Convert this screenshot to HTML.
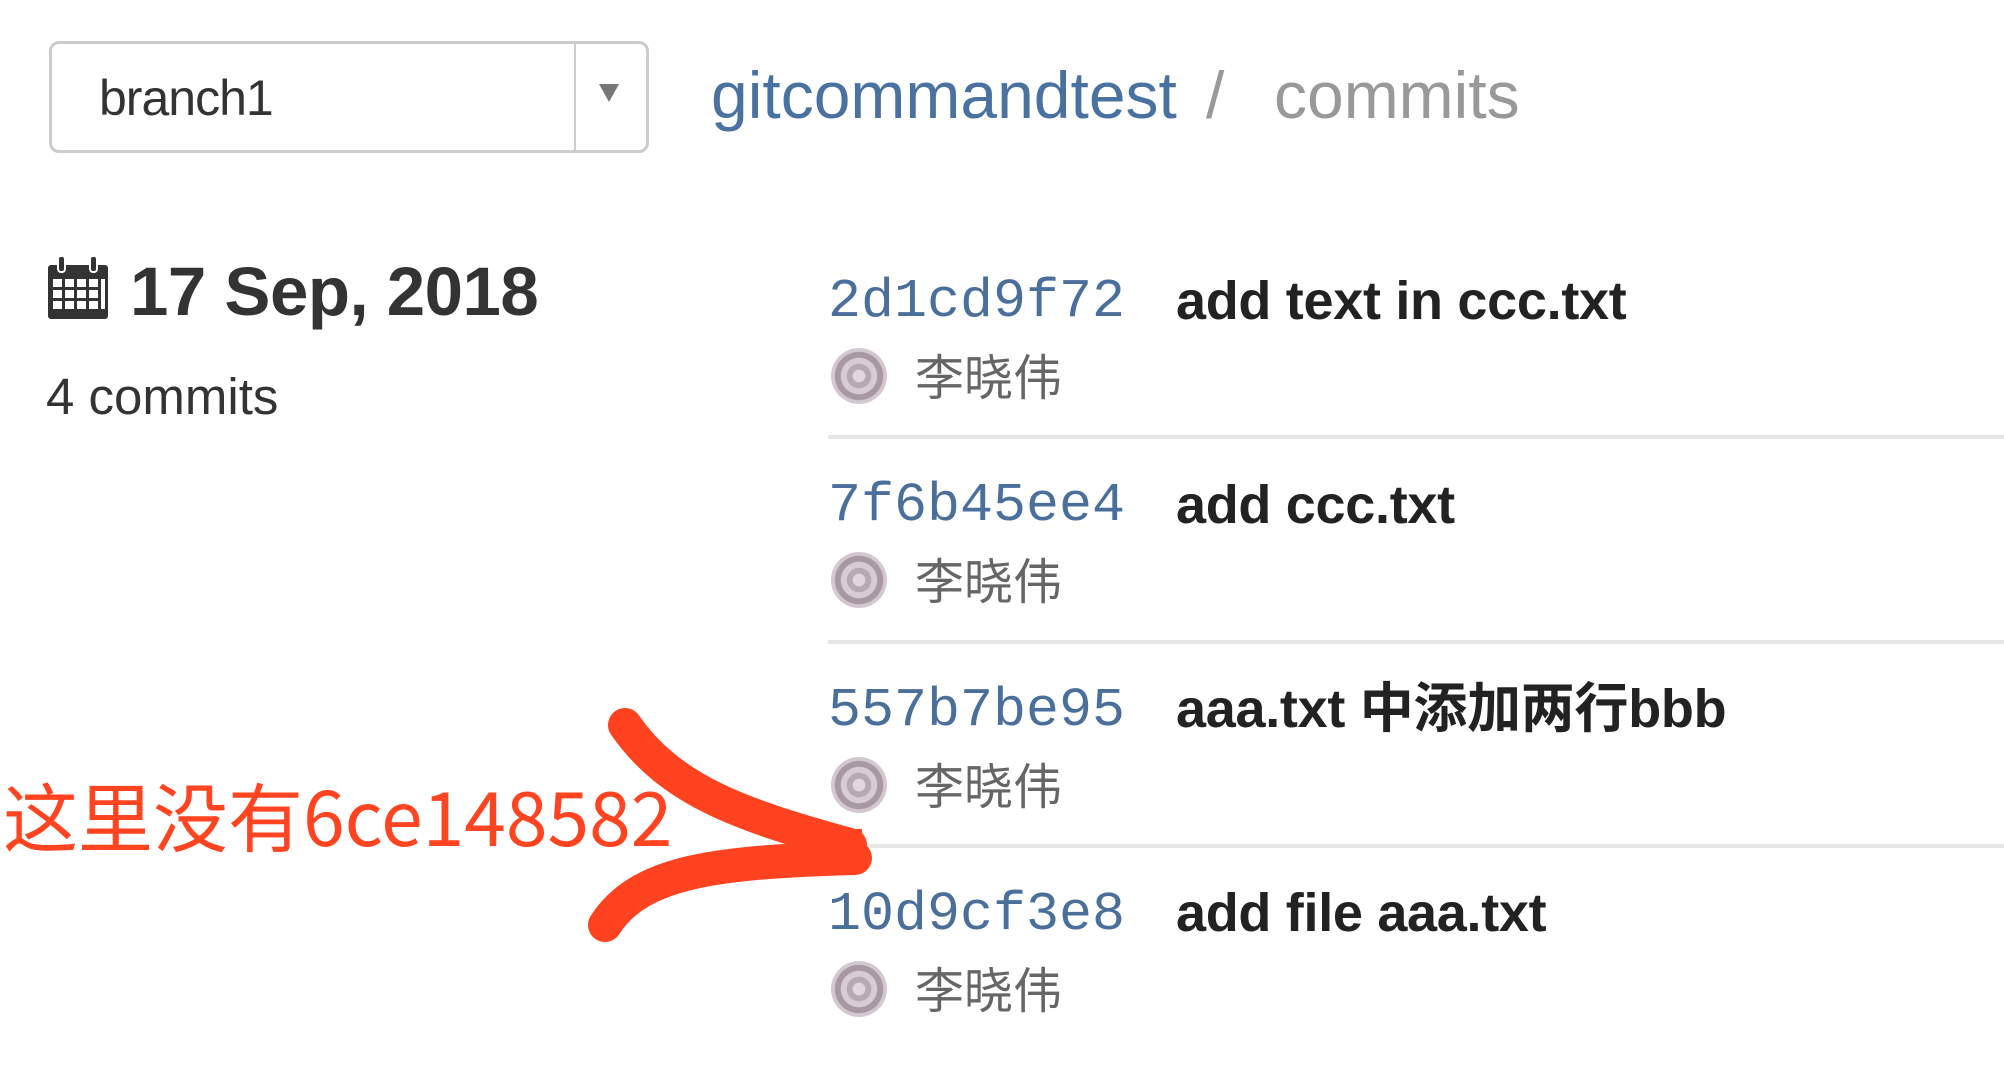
<!DOCTYPE html>
<html><head><meta charset="utf-8"><style>
body{margin:0;width:2004px;height:1072px;background:#fff;position:relative;overflow:hidden;font-family:"Liberation Sans","Noto Sans CJK SC",sans-serif}
.a{position:absolute;white-space:nowrap;line-height:1}
.box{position:absolute;left:49px;top:41px;width:594px;height:106px;border:3px solid #ccc;border-radius:10px}
.div{position:absolute;left:574px;top:44px;width:2px;height:106px;background:#ccc}
.hash{font-family:"Liberation Mono",monospace;font-size:55px;color:#4a6f9a}
.msg{font-weight:bold;font-size:54px;color:#222;font-family:"Liberation Sans","Noto Sans CJK SC",sans-serif;letter-spacing:-0.3px}
.name{font-size:49px;color:#666;font-family:"Noto Sans CJK SC",sans-serif}
.sep{position:absolute;left:828px;width:1176px;height:4px;background:#e6e6e6}
.av{position:absolute;left:831px;width:56px;height:56px;border-radius:50%;background:radial-gradient(circle,#e0d6dc 0 15%,#b8a8b4 17% 30%,#d8ccd4 32% 45%,#a898a4 47% 60%,#d4c8d0 62% 75%,#b0a0ac 77% 90%,#fff 92%)}
</style></head><body>
<div class="box"></div><div class="div"></div>
<div class="a" style="left:99px;top:73px;font-size:50px;color:#333;letter-spacing:-1px">branch1</div>
<div class="a" style="left:599px;top:84px;width:0;height:0;border-left:10px solid transparent;border-right:10px solid transparent;border-top:18px solid #777"></div>
<div class="a" style="left:711px;top:62px;font-size:66px;color:#4a72a0">gitcommandtest</div>
<div class="a" style="left:1206px;top:62px;font-size:66px;color:#999">/</div>
<div class="a" style="left:1274px;top:62px;font-size:66px;color:#999">commits</div>
<svg class="a" style="left:46px;top:255px" width="64" height="66" viewBox="0 0 64 66">
<rect x="2" y="10" width="60" height="54" rx="3" fill="#333"/>
<g fill="#fff"><rect x="7" y="24" width="9" height="8"/><rect x="19" y="24" width="9" height="8"/><rect x="31" y="24" width="9" height="8"/><rect x="43" y="24" width="9" height="8"/><rect x="7" y="35" width="9" height="8"/><rect x="19" y="35" width="9" height="8"/><rect x="31" y="35" width="9" height="8"/><rect x="43" y="35" width="9" height="8"/><rect x="7" y="46" width="9" height="8"/><rect x="19" y="46" width="9" height="8"/><rect x="31" y="46" width="9" height="8"/><rect x="43" y="46" width="9" height="8"/><rect x="55" y="24" width="4" height="30"/></g>
<rect x="12" y="1" width="7" height="16" rx="3" fill="#333" stroke="#fff" stroke-width="2"/><rect x="44" y="1" width="7" height="16" rx="3" fill="#333" stroke="#fff" stroke-width="2"/>
</svg>
<div class="a" style="left:130px;top:257px;font-size:69px;font-weight:bold;color:#333;letter-spacing:-0.5px">17 Sep, 2018</div>
<div class="a" style="left:46px;top:371px;font-size:51px;color:#333">4 commits</div>

<div class="a hash" style="left:828px;top:274px">2d1cd9f72</div>
<div class="a msg" style="left:1176px;top:274px">add text in ccc.txt</div>
<div class="av" style="top:348px"></div>
<div class="a name" style="left:915px;top:350px">李晓伟</div>
<div class="sep" style="top:435px"></div>

<div class="a hash" style="left:828px;top:478px">7f6b45ee4</div>
<div class="a msg" style="left:1176px;top:478px">add ccc.txt</div>
<div class="av" style="top:552px"></div>
<div class="a name" style="left:915px;top:554px">李晓伟</div>
<div class="sep" style="top:640px"></div>

<div class="a hash" style="left:828px;top:683px">557b7be95</div>
<div class="a msg" style="left:1176px;top:682px">aaa.txt 中添加两行bbb</div>
<div class="av" style="top:757px"></div>
<div class="a name" style="left:915px;top:759px">李晓伟</div>
<div class="sep" style="top:844px"></div>

<div class="a hash" style="left:828px;top:887px">10d9cf3e8</div>
<div class="a msg" style="left:1176px;top:886px">add file aaa.txt</div>
<div class="av" style="top:961px"></div>
<div class="a name" style="left:915px;top:963px">李晓伟</div>

<div class="a" style="left:3px;top:776px;font-size:75px;color:#ff4422;font-family:'Noto Sans CJK SC',sans-serif">这里没有6ce148582</div>
<svg class="a" style="left:0;top:0" width="2004" height="1072">
<g fill="none" stroke="#ff4220" stroke-width="34" stroke-linecap="round">
<path d="M625 725 C670 790,740 815,850 845"/>
<path d="M855 858 C720 862,640 870,605 925"/>
</g>
<rect x="835" y="829" width="27" height="36" fill="#ff4220"/>
</svg>
</body></html>
